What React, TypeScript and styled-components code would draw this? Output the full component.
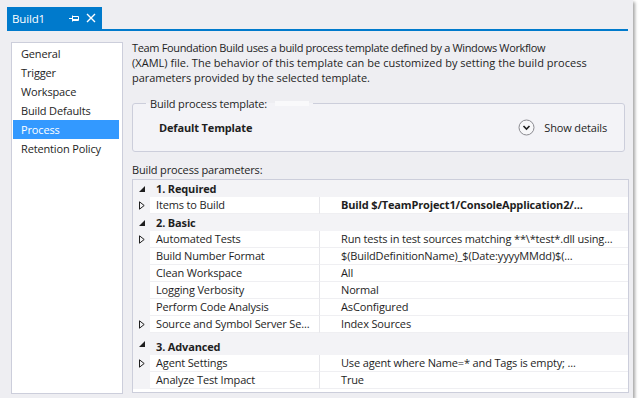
import React from "react";
import styled, { createGlobalStyle } from "styled-components";

const GlobalStyle = createGlobalStyle`
  html, body { margin: 0; padding: 0; background: #ffffff; }
  body {
    font-family: "Open Sans", "Noto Sans", "Liberation Sans", sans-serif;
    font-size: 11px;
    letter-spacing: -0.15px;
    color: #1e1e1e;
  }
  * { box-sizing: border-box; }
`;

const Window = styled.div`
  width: 633px;
  height: 398px;
  background: #eeeef2;
  box-shadow: 2px 2px 3px rgba(0, 0, 0, 0.35);
  display: flex;
  flex-direction: column;
`;

const TabStrip = styled.div`
  margin: 0 5px 0 7px;
  padding-top: 7px;
  border-bottom: 2px solid #007acc;
  display: flex;
`;

const Tab = styled.div`
  height: 22px;
  width: 95px;
  background: #007acc;
  color: #ffffff;
  display: flex;
  align-items: center;
  padding: 0 0 0 5px;
  font-size: 11.5px;
`;

const TabTitle = styled.span`
  flex: 1;
`;

const TabIcon = styled.svg`
  display: block;
  margin-right: 6px;
`;

const Body = styled.div`
  flex: 1;
  display: flex;
  padding: 0 4px 0 11px;
`;

const Nav = styled.div`
  margin-top: 11px;
  width: 112px;
  height: 352px;
  background: #ffffff;
  border: 1px solid #cccedb;
  padding: 1px 3px 0 1px;
`;

const NavItem = styled.div<{ $selected?: boolean }>`
  height: 19px;
  line-height: 19px;
  padding-left: 8px;
  background: ${(p) => (p.$selected ? "#3399ff" : "transparent")};
  color: ${(p) => (p.$selected ? "#ffffff" : "#1e1e1e")};
`;

const Main = styled.div`
  margin-left: 9px;
  width: 497px;
  display: flex;
  flex-direction: column;
`;

const Description = styled.div`
  margin-top: 9px;
  line-height: 15px;
  white-space: nowrap;
`;

const DescLine = styled.div<{ $spacing: number }>`
  letter-spacing: ${(p) => p.$spacing}px;
`;

const Group = styled.fieldset`
  margin: 11px 0 0 0;
  width: 493px;
  border: 1px solid #cccedb;
  border-radius: 3px;
  background: #f3f3f7;
  padding: 0 17px 0 26px;
  min-width: 0;
`;

const Legend = styled.legend`
  margin-left: -13px;
  padding: 0 4px;
  line-height: 15px;
  display: flex;
  align-items: center;
`;

const LegendBlank = styled.span`
  display: inline-block;
  width: 34px;
  height: 5px;
  margin-left: 8px;
  background: #f9f9fb;
`;

const GroupRow = styled.div`
  height: 40px;
  padding-bottom: 8px;
  display: flex;
  align-items: center;
  justify-content: space-between;
`;

const TemplateName = styled.span`
  font-weight: 700;
`;

const Details = styled.div`
  display: flex;
  align-items: center;
  gap: 9px;
`;

const Label = styled.div`
  margin-top: 10px;
  margin-bottom: 2px;
  line-height: 15px;
`;

const Grid = styled.div`
  height: 214px;
  background: #ffffff;
  border: 1px solid #cccedb;
  display: flex;
  flex-direction: column;
`;

const Row = styled.div<{ $category?: boolean; $tall?: boolean }>`
  height: ${(p) => (p.$tall ? 22 : 17)}px;
  display: grid;
  grid-template-columns: 17px 170px 1fr;
  background: ${(p) => (p.$category ? "#f3f3f6" : "#ffffff")};
`;

const Expander = styled.div`
  background: #f3f3f6;
  display: flex;
  align-items: center;
  padding-left: 6px;
`;

const Cell = styled.div<{ $value?: boolean; $bold?: boolean }>`
  display: flex;
  align-items: flex-end;
  padding: 0 6px 1px ${(p) => (p.$value ? 21 : 6)}px;
  border-bottom: 1px solid #efeff2;
  border-right: ${(p) => (p.$value ? "none" : "1px solid #e6e6ea")};
  font-weight: ${(p) => (p.$bold ? 700 : 400)};
  white-space: nowrap;
  overflow: hidden;
  line-height: 15px;
`;

const CategoryCell = styled.div`
  grid-column: 2 / 4;
  display: flex;
  align-items: flex-end;
  padding: 0 6px 1px 6px;
  font-weight: 700;
  line-height: 15px;
`;

const PinIcon = () => (
  <TabIcon width="11" height="10" viewBox="0 0 11 10">
    <path d="M0 5.5h3.5M3.5 2.5v6M3.5 3.5h6v4h-6M4 6.5h5.5" stroke="#ffffff" strokeWidth="1" fill="none" />
  </TabIcon>
);

const CloseIcon = () => (
  <TabIcon width="10" height="10" viewBox="0 0 10 10">
    <path d="M1 1L9 9M9 1L1 9" stroke="#ffffff" strokeWidth="1.4" fill="none" />
  </TabIcon>
);

const ChevronCircle = () => (
  <svg width="17" height="17" viewBox="0 0 17 17" style={{ display: "block" }}>
    <circle cx="8.5" cy="8.5" r="7.5" fill="#f7f7f9" stroke="#8a8a90" strokeWidth="1" />
    <path d="M5.5 7l3 3 3-3" stroke="#1e1e1e" strokeWidth="1.6" fill="none" />
  </svg>
);

const Expanded = () => (
  <svg width="6" height="6" viewBox="0 0 6 6" style={{ display: "block" }}>
    <path d="M6 0V6H0Z" fill="#1e1e1e" />
  </svg>
);

const Collapsed = () => (
  <svg width="6" height="9" viewBox="0 0 6 9" style={{ display: "block" }}>
    <path d="M0.5 0.8L5.2 4.5L0.5 8.2Z" fill="none" stroke="#1e1e1e" strokeWidth="1" />
  </svg>
);

type Item =
  | { kind: "cat"; name: string; tall?: boolean }
  | { kind: "prop"; name: string; value: string; expandable?: boolean; bold?: boolean };

const rows: Item[] = [
  { kind: "cat", name: "1. Required" },
  { kind: "prop", name: "Items to Build", value: "Build $/TeamProject1/ConsoleApplication2/...", expandable: true, bold: true },
  { kind: "cat", name: "2. Basic" },
  { kind: "prop", name: "Automated Tests", value: "Run tests in test sources matching **\\*test*.dll using...", expandable: true },
  { kind: "prop", name: "Build Number Format", value: "$(BuildDefinitionName)_$(Date:yyyyMMdd)$(..." },
  { kind: "prop", name: "Clean Workspace", value: "All" },
  { kind: "prop", name: "Logging Verbosity", value: "Normal" },
  { kind: "prop", name: "Perform Code Analysis", value: "AsConfigured" },
  { kind: "prop", name: "Source and Symbol Server Se...", value: "Index Sources", expandable: true },
  { kind: "cat", name: "3. Advanced", tall: true },
  { kind: "prop", name: "Agent Settings", value: "Use agent where Name=* and Tags is empty; ...", expandable: true },
  { kind: "prop", name: "Analyze Test Impact", value: "True" },
];

const navItems = ["General", "Trigger", "Workspace", "Build Defaults", "Process", "Retention Policy"];

const descLines: [string, number][] = [
  ["Team Foundation Build uses a build process template defined by a Windows Workflow", -0.35],
  ["(XAML) file. The behavior of this template can be customized by setting the build process", 0.03],
  ["parameters provided by the selected template.", -0.05],
];

export default function App() {
  return (
    <>
      <GlobalStyle />
      <Window>
        <TabStrip>
          <Tab>
            <TabTitle>Build1</TabTitle>
            <PinIcon />
            <CloseIcon />
          </Tab>
        </TabStrip>
        <Body>
          <Nav>
            {navItems.map((n) => (
              <NavItem key={n} $selected={n === "Process"}>
                {n}
              </NavItem>
            ))}
          </Nav>
          <Main>
            <Description>
              {descLines.map(([t, s]) => (
                <DescLine key={t} $spacing={s}>
                  {t}
                </DescLine>
              ))}
            </Description>
            <Group>
              <Legend>
                Build process template:
                <LegendBlank />
              </Legend>
              <GroupRow>
                <TemplateName>Default Template</TemplateName>
                <Details>
                  <ChevronCircle />
                  <span>Show details</span>
                </Details>
              </GroupRow>
            </Group>
            <Label>Build process parameters:</Label>
            <Grid>
              {rows.map((r) =>
                r.kind === "cat" ? (
                  <Row key={r.name} $category $tall={r.tall}>
                    <Expander>
                      <Expanded />
                    </Expander>
                    <CategoryCell>{r.name}</CategoryCell>
                  </Row>
                ) : (
                  <Row key={r.name}>
                    <Expander>{r.expandable ? <Collapsed /> : null}</Expander>
                    <Cell>{r.name}</Cell>
                    <Cell $value $bold={r.bold}>
                      {r.value}
                    </Cell>
                  </Row>
                )
              )}
            </Grid>
          </Main>
        </Body>
      </Window>
    </>
  );
}
